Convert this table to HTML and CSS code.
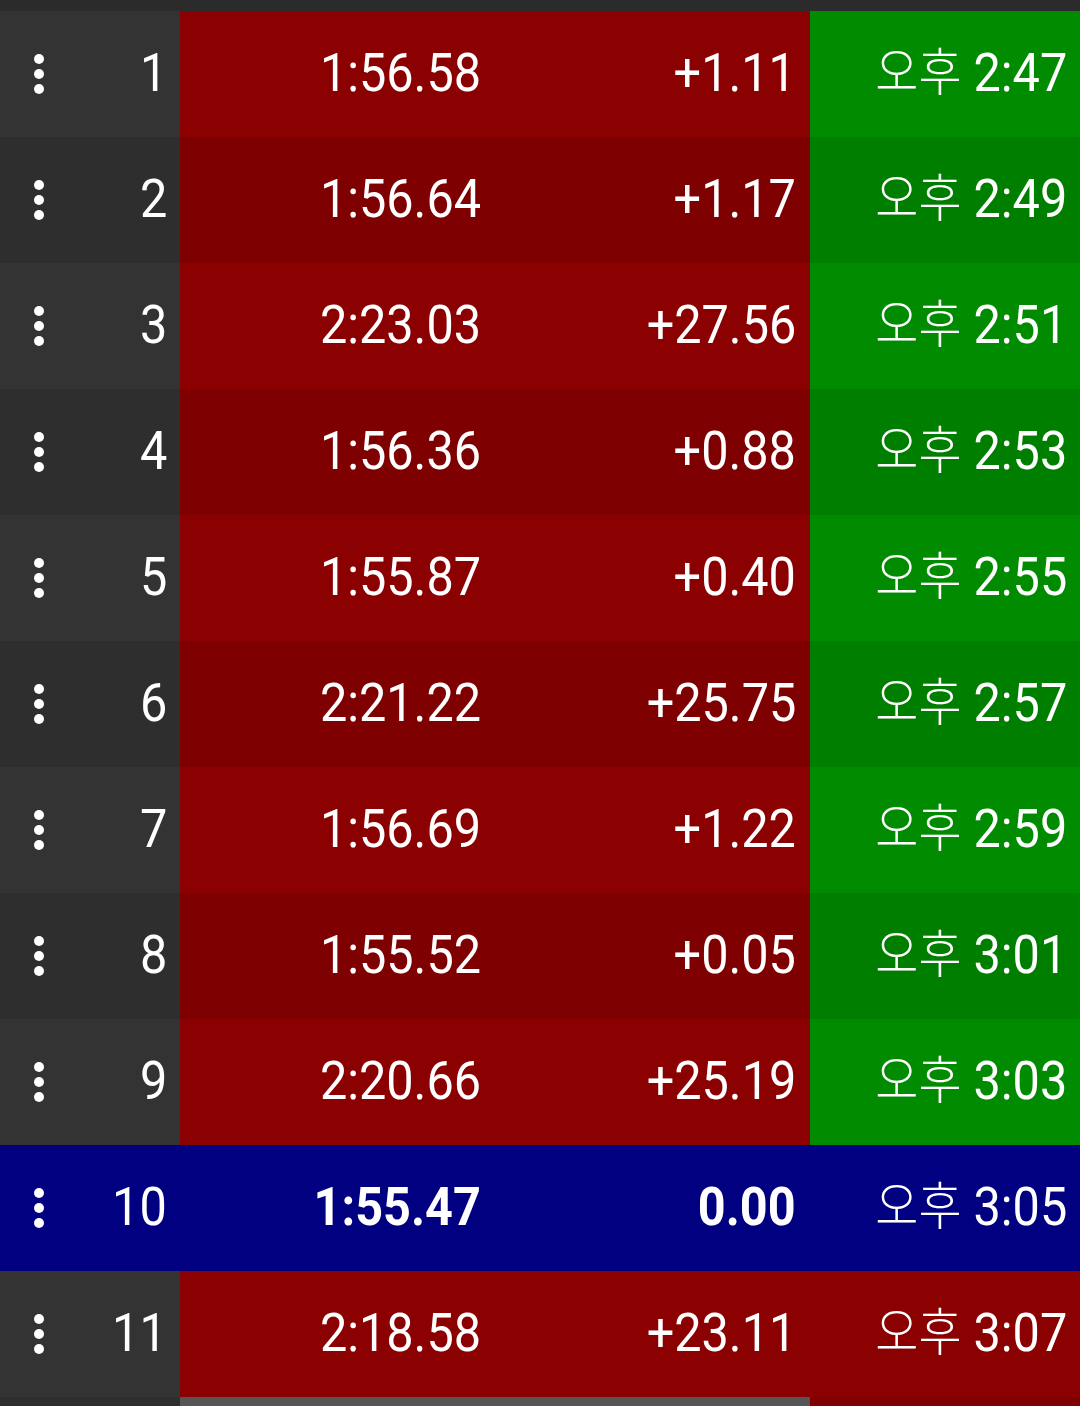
FILE: index.html
```html
<!DOCTYPE html>
<html>
<head>
<meta charset="utf-8">
<link rel="stylesheet" href="styles.css">
</head>
<body>
<div class="table">
  <div class="top-strip"></div>
  <div class="row odd">
    <div class="c-idx"><span class="dots"><i></i><i></i><i></i></span><span class="t">1</span></div>
    <div class="c-time"><span class="t">1:56.58</span></div><div class="c-diff"><span class="t">+1.11</span></div><div class="c-clock ok"><span class="t"><span class="k">오후</span> 2:47</span></div>
  </div>
  <div class="row even">
    <div class="c-idx"><span class="dots"><i></i><i></i><i></i></span><span class="t">2</span></div>
    <div class="c-time"><span class="t">1:56.64</span></div><div class="c-diff"><span class="t">+1.17</span></div><div class="c-clock ok"><span class="t"><span class="k">오후</span> 2:49</span></div>
  </div>
  <div class="row odd">
    <div class="c-idx"><span class="dots"><i></i><i></i><i></i></span><span class="t">3</span></div>
    <div class="c-time"><span class="t">2:23.03</span></div><div class="c-diff"><span class="t">+27.56</span></div><div class="c-clock ok"><span class="t"><span class="k">오후</span> 2:51</span></div>
  </div>
  <div class="row even">
    <div class="c-idx"><span class="dots"><i></i><i></i><i></i></span><span class="t">4</span></div>
    <div class="c-time"><span class="t">1:56.36</span></div><div class="c-diff"><span class="t">+0.88</span></div><div class="c-clock ok"><span class="t"><span class="k">오후</span> 2:53</span></div>
  </div>
  <div class="row odd">
    <div class="c-idx"><span class="dots"><i></i><i></i><i></i></span><span class="t">5</span></div>
    <div class="c-time"><span class="t">1:55.87</span></div><div class="c-diff"><span class="t">+0.40</span></div><div class="c-clock ok"><span class="t"><span class="k">오후</span> 2:55</span></div>
  </div>
  <div class="row even">
    <div class="c-idx"><span class="dots"><i></i><i></i><i></i></span><span class="t">6</span></div>
    <div class="c-time"><span class="t">2:21.22</span></div><div class="c-diff"><span class="t">+25.75</span></div><div class="c-clock ok"><span class="t"><span class="k">오후</span> 2:57</span></div>
  </div>
  <div class="row odd">
    <div class="c-idx"><span class="dots"><i></i><i></i><i></i></span><span class="t">7</span></div>
    <div class="c-time"><span class="t">1:56.69</span></div><div class="c-diff"><span class="t">+1.22</span></div><div class="c-clock ok"><span class="t"><span class="k">오후</span> 2:59</span></div>
  </div>
  <div class="row even">
    <div class="c-idx"><span class="dots"><i></i><i></i><i></i></span><span class="t">8</span></div>
    <div class="c-time"><span class="t">1:55.52</span></div><div class="c-diff"><span class="t">+0.05</span></div><div class="c-clock ok"><span class="t"><span class="k">오후</span> 3:01</span></div>
  </div>
  <div class="row odd">
    <div class="c-idx"><span class="dots"><i></i><i></i><i></i></span><span class="t">9</span></div>
    <div class="c-time"><span class="t">2:20.66</span></div><div class="c-diff"><span class="t">+25.19</span></div><div class="c-clock ok"><span class="t"><span class="k">오후</span> 3:03</span></div>
  </div>
  <div class="row best">
    <div class="c-idx"><span class="dots"><i></i><i></i><i></i></span><span class="t">10</span></div>
    <div class="c-time bold"><span class="t">1:55.47</span></div><div class="c-diff bold"><span class="t">0.00</span></div><div class="c-clock"><span class="t"><span class="k">오후</span> 3:05</span></div>
  </div>
  <div class="row odd">
    <div class="c-idx"><span class="dots"><i></i><i></i><i></i></span><span class="t">11</span></div>
    <div class="c-time"><span class="t">2:18.58</span></div><div class="c-diff"><span class="t">+23.11</span></div><div class="c-clock late"><span class="t"><span class="k">오후</span> 3:07</span></div>
  </div>
  <div class="bottom-strip">
    <div class="b-idx"></div><div class="b-bar"></div><div class="b-clock"></div>
  </div>
</div>
</body>
</html>
```
FILE: styles.css
```css
html, body {
  margin: 0;
  padding: 0;
  background: #2b2b2b;
}
body {
  width: 1080px;
  height: 1406px;
  overflow: hidden;
  font-family: Roboto, "Noto Sans CJK KR", sans-serif;
  color: #ffffff;
}
.table {
  display: flex;
  flex-direction: column;
}
.top-strip {
  height: 11px;
  background: #2b2b2b;
}
.row {
  display: grid;
  grid-template-columns: 180px 315px 315px 270px;
  height: 126px;
  font-size: 54px;
}
.row > div {
  display: flex;
  align-items: center;
  justify-content: flex-end;
  padding-right: 14px;
  padding-bottom: 4px;
}
.row > .c-clock {
  padding-right: 13px;
}
.row > .c-idx {
  padding-right: 13px;
}
.t {
  display: inline-block;
  white-space: nowrap;
  transform: scaleX(0.9);
  transform-origin: right center;
}
.k {
  font-family: "Noto Sans CJK KR", sans-serif;
  font-size: 52px;
  font-weight: 300;
  line-height: 0;
}
.c-idx {
  justify-content: space-between !important;
  padding-left: 34px;
}
.dots {
  display: flex;
  flex-direction: column;
  gap: 5px;
  margin-top: 4px;
}
.dots i {
  display: block;
  width: 10px;
  height: 10px;
  border-radius: 50%;
  background: #ffffff;
}
.bold { font-weight: 700; }

.odd .c-idx { background: #333333; }
.odd .c-time, .odd .c-diff { background: #8b0000; }
.odd .c-clock.ok { background: #008b00; }
.odd .c-clock.late { background: #8b0000; }

.even .c-idx { background: #2e2e2e; }
.even .c-time, .even .c-diff { background: #7e0000; }
.even .c-clock.ok { background: #007e00; }

.best, .best > div { background: #000080; }

.bottom-strip {
  display: grid;
  grid-template-columns: 180px 630px 270px;
  height: 9px;
}
.b-idx { background: #2e2e2e; }
.b-bar { background: #555555; }
.b-clock { background: #7e0000; }
```
